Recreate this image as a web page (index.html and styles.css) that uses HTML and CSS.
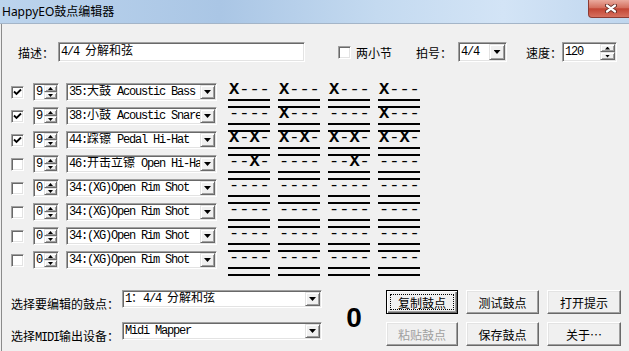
FILE: index.html
```html
<!DOCTYPE html>
<html lang="zh-CN">
  <head>
    <meta charset="UTF-8" />
    <title>HappyEO鼓点编辑器</title>
    <link rel="stylesheet" href="styles.css">
  </head>
  <body>
    <div class="titlebar">
      <span class="title">HappyEO鼓点编辑器</span>
      <span class="close">
        <svg width="12" height="9" viewBox="0 0 12 9">
          <path d="M2 1.5 10 7.5 M10 1.5 2 7.5" stroke="#5e2620" stroke-width="4" stroke-linecap="round" fill="none" />
          <path d="M2 1.5 10 7.5 M10 1.5 2 7.5" stroke="#fff" stroke-width="2.2" stroke-linecap="round" fill="none" />
        </svg>
      </span>
    </div>
    <div class="client">
      <div class="top">
        <span class="desc-label">描述：</span>
        <span class="field desc mono">4/4 <span class="zh">分解和弦</span></span>
        <span class="check two-bars"></span>
        <span class="check-text">两小节</span>
        <span class="meter-label">拍号：</span>
        <span class="combo meter"><span class="combo-text mono">4/4</span><span class="drop"></span></span>
        <span class="tempo-label">速度：</span>
        <span class="spin tempo">
          <span class="spin-val mono">120</span>
          <span class="spin-btns"><span class="arrow up"></span><span class="arrow down"></span></span>
        </span>
      </div>

      <div class="tracks">
        <div class="track">
          <span class="check"><svg class="tick" width="9" height="9" viewBox="0 0 9 9"><path d="M1 3.5 3.5 6 8 1.5" stroke="#000" stroke-width="1.8" fill="none" /></svg></span>
          <span class="spin"><span class="spin-val mono">9</span><span class="spin-btns"><span class="arrow up"></span><span class="arrow down"></span></span></span>
          <span class="combo drum"><span class="combo-text mono">35:<span class="zh">大鼓</span> Acoustic Bass</span><span class="drop"></span></span>
          <div class="beats">
            <div class="beat"><span class="notes"><b>X</b>---</span></div>
            <div class="beat"><span class="notes"><b>X</b>---</span></div>
            <div class="beat"><span class="notes"><b>X</b>---</span></div>
            <div class="beat"><span class="notes"><b>X</b>---</span></div>
          </div>
        </div>
        <div class="track">
          <span class="check"><svg class="tick" width="9" height="9" viewBox="0 0 9 9"><path d="M1 3.5 3.5 6 8 1.5" stroke="#000" stroke-width="1.8" fill="none" /></svg></span>
          <span class="spin"><span class="spin-val mono">9</span><span class="spin-btns"><span class="arrow up"></span><span class="arrow down"></span></span></span>
          <span class="combo drum"><span class="combo-text mono">38:<span class="zh">小鼓</span> Acoustic Snare</span><span class="drop"></span></span>
          <div class="beats">
            <div class="beat"><span class="notes">----</span></div>
            <div class="beat"><span class="notes"><b>X</b>---</span></div>
            <div class="beat"><span class="notes">----</span></div>
            <div class="beat"><span class="notes"><b>X</b>---</span></div>
          </div>
        </div>
        <div class="track">
          <span class="check"><svg class="tick" width="9" height="9" viewBox="0 0 9 9"><path d="M1 3.5 3.5 6 8 1.5" stroke="#000" stroke-width="1.8" fill="none" /></svg></span>
          <span class="spin"><span class="spin-val mono">9</span><span class="spin-btns"><span class="arrow up"></span><span class="arrow down"></span></span></span>
          <span class="combo drum"><span class="combo-text mono">44:<span class="zh">踩镲</span> Pedal Hi-Hat</span><span class="drop"></span></span>
          <div class="beats">
            <div class="beat"><span class="notes"><b>X</b>-<b>X</b>-</span></div>
            <div class="beat"><span class="notes"><b>X</b>-<b>X</b>-</span></div>
            <div class="beat"><span class="notes"><b>X</b>-<b>X</b>-</span></div>
            <div class="beat"><span class="notes"><b>X</b>-<b>X</b>-</span></div>
          </div>
        </div>
        <div class="track">
          <span class="check"></span>
          <span class="spin"><span class="spin-val mono">9</span><span class="spin-btns"><span class="arrow up"></span><span class="arrow down"></span></span></span>
          <span class="combo drum"><span class="combo-text mono">46:<span class="zh">开击立镲</span> Open Hi-Hat</span><span class="drop"></span></span>
          <div class="beats">
            <div class="beat"><span class="notes">--<b>X</b>-</span></div>
            <div class="beat"><span class="notes">----</span></div>
            <div class="beat"><span class="notes">--<b>X</b>-</span></div>
            <div class="beat"><span class="notes">----</span></div>
          </div>
        </div>
        <div class="track">
          <span class="check"></span>
          <span class="spin"><span class="spin-val mono">0</span><span class="spin-btns"><span class="arrow up"></span><span class="arrow down"></span></span></span>
          <span class="combo drum"><span class="combo-text mono">34:(XG)Open Rim Shot</span><span class="drop"></span></span>
          <div class="beats">
            <div class="beat"><span class="notes">----</span></div>
            <div class="beat"><span class="notes">----</span></div>
            <div class="beat"><span class="notes">----</span></div>
            <div class="beat"><span class="notes">----</span></div>
          </div>
        </div>
        <div class="track">
          <span class="check"></span>
          <span class="spin"><span class="spin-val mono">0</span><span class="spin-btns"><span class="arrow up"></span><span class="arrow down"></span></span></span>
          <span class="combo drum"><span class="combo-text mono">34:(XG)Open Rim Shot</span><span class="drop"></span></span>
          <div class="beats">
            <div class="beat"><span class="notes">----</span></div>
            <div class="beat"><span class="notes">----</span></div>
            <div class="beat"><span class="notes">----</span></div>
            <div class="beat"><span class="notes">----</span></div>
          </div>
        </div>
        <div class="track">
          <span class="check"></span>
          <span class="spin"><span class="spin-val mono">0</span><span class="spin-btns"><span class="arrow up"></span><span class="arrow down"></span></span></span>
          <span class="combo drum"><span class="combo-text mono">34:(XG)Open Rim Shot</span><span class="drop"></span></span>
          <div class="beats">
            <div class="beat"><span class="notes">----</span></div>
            <div class="beat"><span class="notes">----</span></div>
            <div class="beat"><span class="notes">----</span></div>
            <div class="beat"><span class="notes">----</span></div>
          </div>
        </div>
        <div class="track">
          <span class="check"></span>
          <span class="spin"><span class="spin-val mono">0</span><span class="spin-btns"><span class="arrow up"></span><span class="arrow down"></span></span></span>
          <span class="combo drum"><span class="combo-text mono">34:(XG)Open Rim Shot</span><span class="drop"></span></span>
          <div class="beats">
            <div class="beat"><span class="notes">----</span></div>
            <div class="beat"><span class="notes">----</span></div>
            <div class="beat"><span class="notes">----</span></div>
            <div class="beat"><span class="notes">----</span></div>
          </div>
        </div>
      </div>

      <div class="bottom">
        <div class="pick">
          <div class="pick-row">
            <span class="pick-label">选择要编辑的鼓点：</span>
            <span class="combo wide"><span class="combo-text mono">1<span class="zh">：</span>4/4 <span class="zh">分解和弦</span></span><span class="drop"></span></span>
          </div>
          <div class="pick-row">
            <span class="pick-label">选择<span class="mono">MIDI</span>输出设备：</span>
            <span class="combo wide"><span class="combo-text mono">Midi Mapper</span><span class="drop"></span></span>
          </div>
        </div>
        <div class="count">0</div>
        <div class="buttons">
          <button class="btn default"><span class="focus">复制鼓点</span></button>
          <button class="btn">测试鼓点</button>
          <button class="btn">打开提示</button>
          <button class="btn" disabled>粘贴鼓点</button>
          <button class="btn">保存鼓点</button>
          <button class="btn">关于…</button>
        </div>
      </div>
    </div>
  </body>
</html>
```

FILE: styles.css
```css
* {
  box-sizing: border-box;
}
body {
  margin: 0;
  width: 629px;
  height: 351px;
  overflow: hidden;
  background-color: #f0f0f0;
  font-family: "Noto Sans CJK SC", "Noto Sans", sans-serif;
  font-size: 12px;
  color: #000;
}

/* window frame */
.titlebar {
  height: 24px;
  display: flex;
  justify-content: space-between;
  overflow: hidden;
  border-bottom: 1px solid #a4b5c8;
  background: linear-gradient(to right, #bcd4ed, #aac6e5 35%, #c4daf0 60%, #d3e4f6 80%, #bfd6ee);
}
.title {
  font-family: "Noto Sans", "Noto Sans CJK SC", sans-serif;
  font-size: 12px;
  line-height: 23px;
  padding-left: 2px;
}
.close {
  width: 45px;
  height: 18px;
  margin-right: -4px;
  display: flex;
  justify-content: center;
  align-items: center;
  border: 1px solid #8c3b33;
  border-top: none;
  border-radius: 0 0 4px 4px;
  background: linear-gradient(#eaaa9e, #d4705f 45%, #c24534 52%, #d7705f);
}
.client {
  height: 327px;
  margin-left: 1px;
  border-left: 1px solid #8b8b8b;
  padding: 18px 0 0 9px;
}

/* shared controls */
.mono {
  font-family: "Liberation Mono", "Noto Sans CJK SC", monospace;
  font-size: 12px;
  letter-spacing: -1.2px;
}
.zh {
  letter-spacing: 0;
}
.field,
.combo,
.spin,
.check {
  background-color: #fff;
  border: 1px solid;
  border-color: #a0a0a0 #fff #fff #a0a0a0;
  box-shadow: inset 1px 1px #696969, inset -1px -1px #e3e3e3;
}
.field {
  height: 20px;
  padding-left: 2px;
  line-height: 18px;
  white-space: nowrap;
}
.check {
  width: 13px;
  height: 13px;
  flex: none;
  display: flex;
  justify-content: center;
  align-items: center;
}
.combo,
.spin {
  display: flex;
  padding: 1px;
  flex: none;
}
.combo-text,
.spin-val {
  flex: 1;
  overflow: hidden;
  white-space: nowrap;
  padding-left: 1px;
  line-height: 14px;
}
.drop,
.arrow {
  background-color: #f0f0f0;
  border: 1px solid;
  border-color: #e3e3e3 #696969 #696969 #e3e3e3;
  box-shadow: inset 1px 1px #fff, inset -1px -1px #a0a0a0;
  display: flex;
  justify-content: center;
  align-items: center;
}
.drop {
  width: 15px;
  flex: none;
}
.drop:after,
.arrow:after {
  content: "";
  width: 7px;
  height: 4px;
  background-color: #000;
  clip-path: polygon(0 0, 100% 0, 50% 100%);
}
.spin-btns {
  width: 13px;
  display: flex;
  flex-direction: column;
}
.arrow {
  flex: 1;
}
.arrow:after {
  width: 5px;
  height: 3px;
}
.arrow.up:after {
  clip-path: polygon(50% 0, 100% 100%, 0 100%);
}

/* top row */
.top {
  display: flex;
  align-items: center;
  height: 20px;
}
.desc-label {
  width: 40px;
  margin-left: 7px;
}
.desc {
  width: 247px;
}
.two-bars {
  margin-left: 33px;
}
.check-text {
  margin-left: 5px;
}
.meter-label {
  width: 42px;
  margin-left: 24px;
}
.meter {
  width: 49px;
  height: 20px;
}
.meter .combo-text {
  line-height: 16px;
}
.meter .drop {
  width: 16px;
}
.tempo-label {
  width: 36px;
  margin-left: 19px;
}
.tempo {
  width: 55px;
  height: 20px;
}
.tempo .spin-val {
  line-height: 16px;
}
.tempo .spin-btns {
  width: 15px;
}

/* drum tracks */
.tracks {
  margin-top: 21px;
}
.track {
  display: flex;
  align-items: flex-start;
  height: 24px;
}
.track .check {
  margin-top: 3px;
}
.track .spin {
  width: 26px;
  height: 18px;
  margin-left: 9px;
}
.drum {
  width: 151px;
  height: 18px;
  margin-left: 7px;
}
.beats {
  display: flex;
  gap: 8px;
  margin-left: 11px;
}
.beat {
  width: 42px;
}
.notes {
  display: block;
  height: 14px;
  padding-left: 1px;
  font-family: "Liberation Mono", monospace;
  font-size: 17px;
  line-height: 14px;
  white-space: nowrap;
}
.beat:after {
  content: "";
  display: block;
  height: 5px;
  margin-top: 2px;
  border-top: 2px solid #000;
  border-bottom: 2px solid #000;
}

/* bottom part */
.bottom {
  display: flex;
  margin-top: 15px;
}
.pick {
  width: 311px;
  display: flex;
  flex-direction: column;
  gap: 8px;
}
.pick-row {
  display: flex;
  height: 24px;
}
.pick-label {
  width: 111px;
  padding-top: 7px;
  line-height: 14px;
}
.wide {
  width: 200px;
  height: 18px;
}
.count {
  width: 64px;
  text-align: center;
  font-family: "Liberation Sans", sans-serif;
  font-size: 28px;
  font-weight: bold;
  line-height: 56px;
}
.buttons {
  display: grid;
  grid-template-columns: 72px 73px 74px;
  grid-auto-rows: 24px;
  gap: 8px;
}
.btn {
  font: inherit;
  color: #000;
  padding: 0;
  background-color: #f0f0f0;
  border: 1px solid;
  border-color: #fff #696969 #696969 #fff;
  box-shadow: inset -1px -1px #a0a0a0, inset 1px 1px #e3e3e3;
}
.btn:disabled {
  color: #a0a0a0;
}
.btn.default {
  display: flex;
  padding: 3px;
  border-color: #000;
  box-shadow: inset 1px 1px #fff, inset -1px -1px #696969, inset -2px -2px #a0a0a0;
}
.focus {
  flex: 1;
  display: flex;
  justify-content: center;
  align-items: center;
  border: 1px dotted #000;
}
```
